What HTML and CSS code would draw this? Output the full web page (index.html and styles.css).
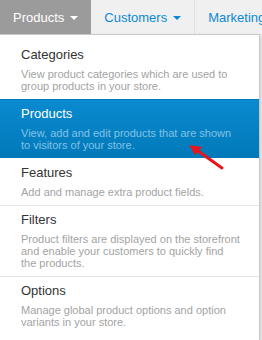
FILE: index.html
```html
<!DOCTYPE html>
<html>
  <head>
    <meta charset="utf-8">
    <title>Products menu</title>
    <link rel="stylesheet" href="styles.css">
  </head>
  <body>
    <nav class="navbar">
      <a class="nav-tab active" href="#">Products <span class="caret"></span></a>
      <a class="nav-tab" href="#">Customers <span class="caret"></span></a>
      <a class="nav-tab" href="#">Marketing <span class="caret"></span></a>
    </nav>
    <ul class="dropdown">
      <li class="menu-item">
        <a href="#">
          <span class="item-title">Categories</span>
          <span class="item-desc">View product categories which are used to group products in your store.</span>
        </a>
      </li>
      <li class="menu-item active">
        <a href="#">
          <span class="item-title">Products</span>
          <span class="item-desc">View, add and edit products that are shown to visitors of your store.</span>
        </a>
      </li>
      <li class="menu-item">
        <a href="#">
          <span class="item-title">Features</span>
          <span class="item-desc">Add and manage extra product fields.</span>
        </a>
      </li>
      <li class="menu-item">
        <a href="#">
          <span class="item-title">Filters</span>
          <span class="item-desc">Product filters are displayed on the storefront and enable your customers to quickly find the products.</span>
        </a>
      </li>
      <li class="menu-item">
        <a href="#">
          <span class="item-title">Options</span>
          <span class="item-desc">Manage global product options and option variants in your store.</span>
        </a>
      </li>
    </ul>
    <svg class="pointer" width="40" height="30" viewBox="0 0 40 30">
      <path d="M33 24 L9 7" stroke="#e8141b" stroke-width="3" stroke-linecap="round"/>
      <path d="M0 1 L13 3 L6 11 Z" fill="#e8141b"/>
    </svg>
  </body>
</html>
```

FILE: styles.css
```css
body {
  margin: 0;
  background-color: #eeeeee;
  font-family: "Liberation Sans", Arial, sans-serif;
  position: relative;
  width: 262px;
  height: 340px;
  overflow: hidden;
}
.navbar {
  display: flex;
  height: 34px;
  background-color: #f0f0f0;
  white-space: nowrap;
}
.nav-tab {
  display: flex;
  align-items: center;
  gap: 6px;
  padding: 0 13px;
  font-size: 13px;
  color: #0b89d6;
  text-decoration: none;
  border-right: 1px solid #e2e2e2;
}
.nav-tab.active {
  background-color: #9b9b9b;
  color: #fff;
  border-right: none;
}
.caret {
  width: 0;
  height: 0;
  margin-top: 1px;
  border-top: 4px solid currentColor;
  border-left: 4px solid transparent;
  border-right: 4px solid transparent;
}
.dropdown {
  list-style: none;
  margin: 0;
  padding: 5px 0;
  width: 259px;
  background-color: #fff;
  border-top: 1px solid #c8c8c8;
  border-right: 1px solid #c8c8c8;
  box-shadow: 1px 2px 4px rgba(0, 0, 0, 0.15);
}
.menu-item {
  border-top: 1px solid #e5e5e5;
}
.menu-item:first-child,
.menu-item.active,
.menu-item.active + .menu-item {
  border-top-color: transparent;
}
.menu-item a {
  display: block;
  padding: 5px 19px 7px 21px;
  text-decoration: none;
}
.item-title {
  display: block;
  font-size: 13px;
  line-height: 18px;
  color: #333;
}
.item-desc {
  display: block;
  margin-top: 4px;
  font-size: 11px;
  line-height: 12px;
  color: #a3a3a3;
}
.menu-item.active {
  background: linear-gradient(#0a8ad0, #0079b8);
}
.menu-item.active .item-title {
  color: #fff;
}
.menu-item.active .item-desc {
  color: #86c2e6;
}
.pointer {
  position: absolute;
  left: 189px;
  top: 144px;
}
```
